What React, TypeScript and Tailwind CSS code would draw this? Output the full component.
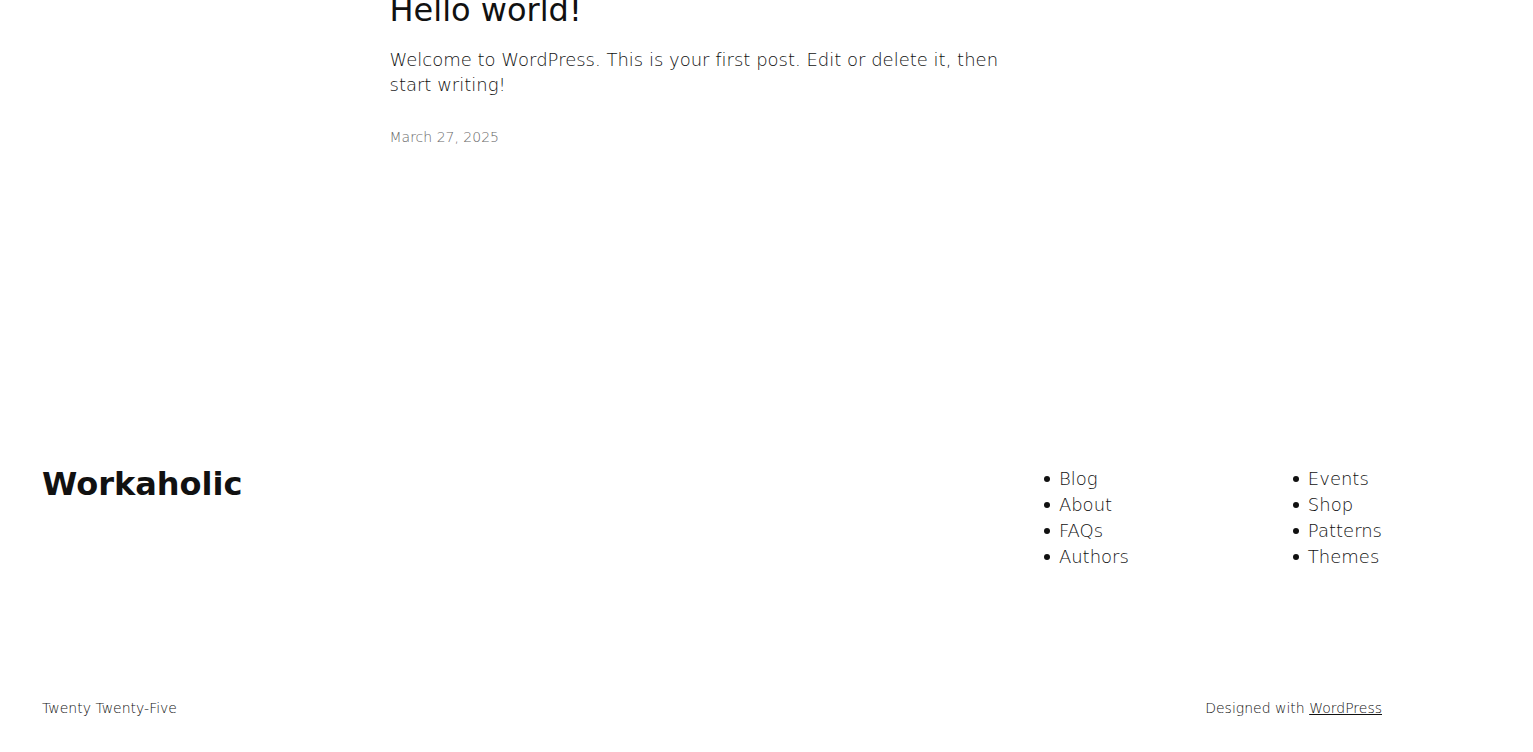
const postsNav = ["Blog", "About", "FAQs", "Authors"];
const siteNav = ["Events", "Shop", "Patterns", "Themes"];

function LinkList({ items, label }: { items: string[]; label: string }) {
  return (
    <nav aria-label={label}>
      <ul className="text-[18px] leading-[26px] font-extralight">
        {items.map((item) => (
          <li
            key={item}
            className="flex items-center gap-[9px] before:size-1.5 before:rounded-full before:bg-[#111111] before:content-['']"
          >
            <a href="#" className="hover:underline">{item}</a>
          </li>
        ))}
      </ul>
    </nav>
  );
}

export default function App() {
  return (
    <div className="overflow-hidden bg-white text-[#111111] antialiased [font-family:'DejaVu_Sans',sans-serif] [font-variant-ligatures:none]">
      <main className="-mt-[11px] pr-[151px] pb-[317px] pl-[42px]">
        <article className="mx-auto w-full max-w-[645px]">
          <h2 className="text-[32px] leading-[42px]">
            <a href="#">Hello world!</a>
          </h2>
          <p className="mt-4 text-[18px] leading-[25px] font-extralight">
            Welcome to WordPress. This is your first post. Edit or delete it, then start writing!
          </p>
          <time dateTime="2025-03-27" className="mt-7 block text-[14px] leading-[24px] font-extralight text-[#686868]">
            March 27, 2025
          </time>
        </article>
      </main>
      <footer className="pr-[151px] pb-8 pl-[42px]">
        <div className="flex items-start justify-between">
          <p className="text-[32px] leading-[36px] font-bold">
            <a href="#">Workaholic</a>
          </p>
          <div className="flex gap-[164px]">
            <LinkList items={postsNav} label="Posts" />
            <LinkList items={siteNav} label="Site" />
          </div>
        </div>
        <div className="mt-[126px] flex justify-between text-[14px] leading-[24px] font-extralight">
          <p>Twenty Twenty-Five</p>
          <p>
            Designed with <a href="https://wordpress.org" className="underline">WordPress</a>
          </p>
        </div>
      </footer>
    </div>
  );
}
